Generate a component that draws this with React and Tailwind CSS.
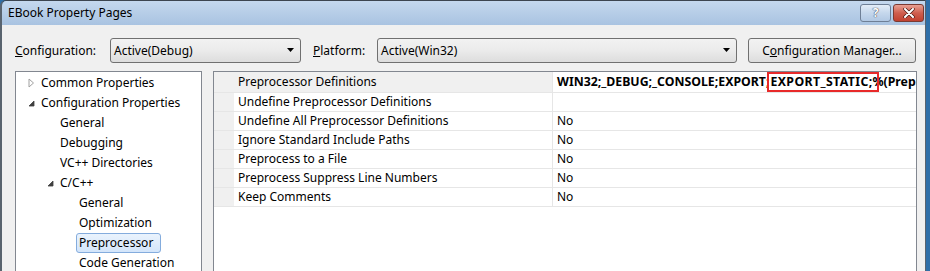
import React from "react";

const font = { fontFamily: '"Noto Sans", "Liberation Sans", sans-serif' };

function Combo({ text, className }) {
  return (
    <div
      className={`h-[25px] rounded-[3px] border border-[#707070] bg-gradient-to-b from-[#f2f2f2] via-[#ebebeb] to-[#dddddd] flex items-center justify-between pl-[3px] pr-[5px] ${className}`}
    >
      <span className="text-[12px] text-black leading-none">{text}</span>
      <svg width="8" height="5" viewBox="0 0 8 5">
        <path d="M0 0 H7 L3.5 4 Z" fill="#000" />
      </svg>
    </div>
  );
}

const tree = [
  { label: "Common Properties", indent: 41, arrow: "closed", ax: 28 },
  { label: "Configuration Properties", indent: 41, arrow: "open", ax: 28 },
  { label: "General", indent: 60 },
  { label: "Debugging", indent: 60 },
  { label: "VC++ Directories", indent: 60 },
  { label: "C/C++", indent: 60, arrow: "open", ax: 47 },
  { label: "General", indent: 79 },
  { label: "Optimization", indent: 79 },
  { label: "Preprocessor", indent: 79, selected: true },
  { label: "Code Generation", indent: 79 },
];

const rows = [
  ["Preprocessor Definitions", null],
  ["Undefine Preprocessor Definitions", ""],
  ["Undefine All Preprocessor Definitions", "No"],
  ["Ignore Standard Include Paths", "No"],
  ["Preprocess to a File", "No"],
  ["Preprocess Suppress Line Numbers", "No"],
  ["Keep Comments", "No"],
];

export default function App() {
  return (
    <div className="w-[930px] h-[271px] overflow-hidden flex bg-[#2f6fa8]" style={font}>
      <div className="w-[926px] h-full flex flex-col border-l-2 border-r border-[#59636e] border-t border-t-[#3c4550] rounded-tl-[6px] overflow-hidden">
        {/* title bar */}
        <div className="h-[24px] shrink-0 bg-gradient-to-b from-[#c4d8ee] to-[#a9c3e1] flex items-center justify-between pl-[6px] pr-[1px]">
          <span className="text-[12px] text-black leading-none">EBook Property Pages</span>
          <div className="flex gap-[2px] self-start mt-[3px]">
            <div className="w-[31px] h-[18px] rounded-[3px] border border-[#6e7f96] bg-gradient-to-b from-[#e3edf8] via-[#c5d7ec] to-[#b1c8e3] flex items-center justify-center">
              <span className="text-[12px] font-bold text-white leading-none" style={{ textShadow: "0 0 1px #334, 0 0 1px #334" }}>?</span>
            </div>
            <div className="w-[31px] h-[18px] rounded-[3px] border border-[#7a3a32] bg-gradient-to-b from-[#e8a093] via-[#cf5e4e] to-[#c1402f] flex items-center justify-center">
              <svg width="12" height="10" viewBox="0 0 12 10">
                <path d="M2 1 L10 9 M10 1 L2 9" stroke="#4a1a14" strokeWidth="3.4" strokeLinecap="round" />
                <path d="M2 1 L10 9 M10 1 L2 9" stroke="#fff" strokeWidth="2" strokeLinecap="round" />
              </svg>
            </div>
          </div>
        </div>
        {/* body */}
        <div className="flex-1 bg-[#f0f0f0] flex flex-col pl-[13px] pr-[7px]">
          <div className="flex items-center mt-[13px] h-[25px]">
            <span className="text-[12px] text-black w-[95px]">
              <span className="underline">C</span>onfiguration:
            </span>
            <Combo text="Active(Debug)" className="w-[191px]" />
            <span className="text-[12px] text-black ml-[12px] w-[64px]">
              <span className="underline">P</span>latform:
            </span>
            <Combo text="Active(Win32)" className="w-[360px]" />
            <div className="ml-[11px] w-[168px] h-[25px] rounded-[3px] border border-[#707070] bg-gradient-to-b from-[#f2f2f2] via-[#ebebeb] to-[#dddddd] flex items-center justify-center">
              <span className="text-[12px] text-black leading-none">
                C<span className="underline">o</span>nfiguration Manager...
              </span>
            </div>
          </div>
          <div className="flex mt-[8px] flex-1 gap-[11px]">
            {/* tree */}
            <div className="w-[187px] border border-[#828790] bg-white pt-[1px]">
              {tree.map((t, i) => (
                <div key={i} className="h-[20px] relative flex items-center">
                  {t.arrow === "closed" && (
                    <svg className="absolute" style={{ left: t.ax - 16 }} width="7" height="10" viewBox="0 0 7 10">
                      <path d="M1 1 L5.5 5 L1 9 Z" fill="#fff" stroke="#a0a0a0" />
                    </svg>
                  )}
                  {t.arrow === "open" && (
                    <svg className="absolute" style={{ left: t.ax - 16 }} width="7" height="7" viewBox="0 0 7 7">
                      <path d="M6 1 L6 6 L1 6 Z" fill="#404040" stroke="#404040" strokeWidth="0.8" />
                    </svg>
                  )}
                  {t.selected ? (
                    <span
                      className="absolute h-[20px] rounded-[3px] border border-[#84acdd] bg-gradient-to-b from-[#eaf3fd] to-[#d3e5fa] flex items-center pl-[2px] text-[12px] text-black"
                      style={{ left: t.indent - 19, width: 85 }}
                    >
                      {t.label}
                    </span>
                  ) : (
                    <span className="absolute text-[12px] text-black whitespace-nowrap" style={{ left: t.indent - 16 }}>
                      {t.label}
                    </span>
                  )}
                </div>
              ))}
            </div>
            {/* grid */}
            <div className="w-[704px] border border-[#828790] bg-white overflow-hidden">
              {rows.map(([name, val], i) => (
                <div key={i} className={`${i === 0 ? "h-[21px]" : "h-[19px]"} flex border-b border-[#e6e6e6]`}>
                  <div className="w-[20px] bg-[#f0f0f0] shrink-0" />
                  <div className={`w-[319px] shrink-0 border-r border-[#e6e6e6] flex items-center pl-[4px] text-[12px] text-black whitespace-nowrap ${i === 0 ? "bg-[#f0f0f0]" : ""}`}>
                    {name}
                  </div>
                  <div className="flex-1 flex items-stretch pl-[4px] text-[12px] text-black whitespace-nowrap overflow-hidden">
                    {val === null ? (
                      <div className="flex items-stretch font-bold text-[12.3px]">
                        <span className="flex items-center">WIN32;_DEBUG;_CONSOLE;EXPORT;</span>
                        <span className="flex items-center shrink-0 w-[112px] border-2 border-[#e82a2a] ml-[-2px] pl-[1px] tracking-[0.4px] relative z-10">
                          EXPORT_STATIC;
                        </span>
                        <span className="flex items-center ml-[-7px]">%(Prep</span>
                      </div>
                    ) : (
                      <span className="flex items-center">{val}</span>
                    )}
                  </div>
                </div>
              ))}
            </div>
          </div>
        </div>
      </div>
    </div>
  );
}
